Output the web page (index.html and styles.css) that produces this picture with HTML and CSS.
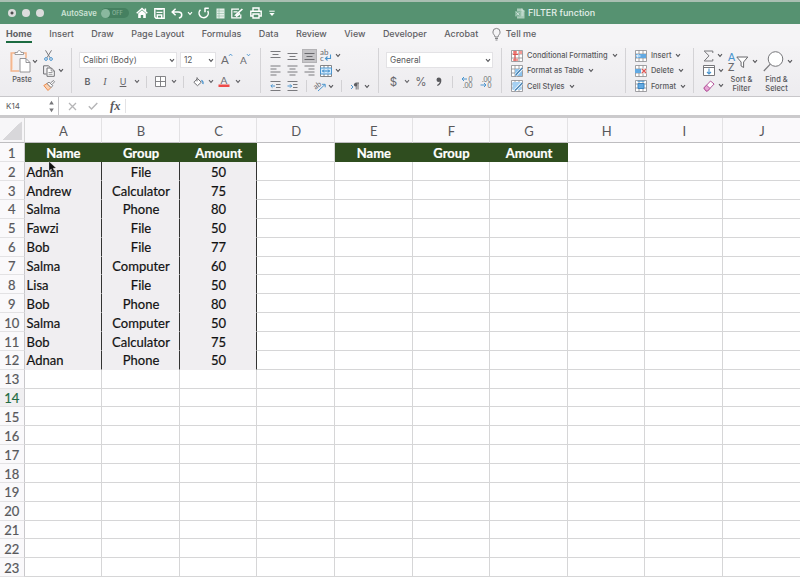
FILE: index.html
```html
<!DOCTYPE html>
<html lang="en">
<head>
    <meta charset="UTF-8">
    <meta name="viewport" content="width=device-width, initial-scale=1.0">
    <title>FILTER function</title>
    <link rel="stylesheet" href="styles.css">
</head>
<body>
    <svg class="defs">
        <symbol id="chev" viewBox="0 0 6 5"><path d="M1 1.2l2 2.2 2-2.2" fill="none" stroke="currentColor" stroke-width="1.1"/></symbol>
        <symbol id="table" viewBox="0 0 12 12"><path d="M.5.5h11v11H.5zM.5 4h11M.5 8h11M4 .5v11M8 .5v11" fill="#fff" stroke="#8a8a8e" stroke-width=".8"/></symbol>
    </svg>

    <div class="titlebar">
        <div class="lights"><i class="edited"></i><i></i><i></i></div>
        <span class="autosave">AutoSave</span>
        <span class="toggle"><i></i>OFF</span>
        <div class="quick">
            <svg width="12" height="12" viewBox="0 0 12 12"><path d="M.7 6.3L6 1.4l5.3 4.9M9.4 1.5v2.7" fill="none" stroke="#fff" stroke-width="1.5"/><path d="M2.2 6.6L6 3.2l3.8 3.4V11H7.2V8H4.8v3H2.2z" fill="#fff"/></svg>
            <svg width="11" height="11" viewBox="0 0 11 11"><path d="M.8.8h9.4v9.4H2L.8 9z" fill="none" stroke="#fff" stroke-width="1.4"/><path d="M2.5 1h6M2.5 4.4h6M3.3 10V7h4.4v3" fill="none" stroke="#fff" stroke-width="1.4"/></svg>
            <svg width="12" height="11" viewBox="0 0 12 11"><path d="M4.6.8L1.2 4l3.4 3.2M1.5 4h5.8c4.6 0 4.4 5.2.6 6" fill="none" stroke="#fff" stroke-width="1.5"/></svg>
            <svg class="undo-chev" width="6" height="5"><use href="#chev"/></svg>
            <svg width="12" height="12" viewBox="0 0 12 12"><path d="M2.500 2.700a4.600 4.600 0 1 0 7.200 1.100M6.600 1.300h4.200M7 1v4.200" fill="none" stroke="#fff" stroke-width="1.500"/></svg>
            <svg width="9" height="11" viewBox="0 0 9 11"><path d="M.5.5h8v10h-8z" fill="#e5f0ea"/><path d="M1 3h7M1 5.5h7M1 8h7M3 .5v10" stroke="#8ab89f" stroke-width=".6"/></svg>
            <svg width="13" height="11" viewBox="0 0 13 11"><path d="M8 1.2H.8v8.6h9V6.5M2.5 3.8h4" fill="none" stroke="#fff" stroke-width="1.2"/><path d="M3.2 8l2-.2L12 1.6 10.8.6 4.2 6.5z" fill="#fff"/><path d="M5 8.5l4-3" stroke="#fff" stroke-width="1.6"/></svg>
            <svg width="12" height="12" viewBox="0 0 12 12"><path d="M3 4V1h6v3M3 9H.8V4.2h10.4V9H9M3 7h6v4H3z" fill="none" stroke="#fff" stroke-width="1.4"/></svg>
            <svg width="6" height="7" viewBox="0 0 6 7"><path d="M.3 1.2h5.4" stroke="#fff"/><path d="M.4 3h5.2L3 5.9z" fill="#fff"/></svg>
        </div>
        <div class="doc">
            <svg width="10" height="11" viewBox="0 0 10 11"><path d="M2 .5h5L9.500 3v7.500H2z" fill="#a9cbb9"/><path d="M0 3h5.500v5.500H0z" fill="#84b49b"/><path d="M1.300 4.300l3 3m0-3l-3 3M7 .5V3h2.500M6.500 5h2M6.500 7h2" stroke="#e0eee7" stroke-width=".8" fill="none"/></svg>
            FILTER function
        </div>
    </div>

    <div class="tabs">
        <span class="active">Home</span>
        <span>Insert</span>
        <span>Draw</span>
        <span>Page Layout</span>
        <span>Formulas</span>
        <span>Data</span>
        <span>Review</span>
        <span>View</span>
        <span>Developer</span>
        <span>Acrobat</span>
        <span class="tell"><svg width="9" height="13" viewBox="0 0 9 13"><path d="M3 9C3 7 .9 6.500.9 4a3.500 3.500 0 0 1 7.200 0C8.100 6.500 6 7 6 9zM3 10.500h3M3.500 12h2" fill="none" stroke="#77777b" stroke-width=".9"/></svg>Tell me</span>
    </div>

    <div class="ribbon">
        <div class="group clipboard">
            <div class="paste">
                <div class="paste-top">
                    <svg width="21" height="23" viewBox="0 0 21 23"><path d="M5 3H1.200v18H9" fill="none" stroke="#f3b48b" stroke-width="1.500"/><path d="M2.500 4v15.500" stroke="#fbd9c3"/><path d="M13 3h3v5" fill="none" stroke="#f3b48b" stroke-width="1.500"/><path d="M5 4.500V2.500h2.500c0-2.600 3.500-2.600 3.500 0h2.500v2z" fill="#fff" stroke="#88888b" stroke-width=".8"/><path d="M10 8.500h6l4 4V22H10z" fill="#fff" stroke="#88888b" stroke-width=".9"/><path d="M16 8.500v4h4" fill="none" stroke="#88888b" stroke-width=".9"/></svg>
                    <svg width="6" height="5"><use href="#chev"/></svg>
                </div>
                <span>Paste</span>
            </div>
            <div class="stack">
                <div class="cut"><svg width="9" height="11" viewBox="0 0 9 11"><path d="M1.500.3l4.600 7.500M7.500.3L2.900 7.800" stroke="#7a7a7e"/><circle cx="2" cy="9" r="1.400" fill="none" stroke="#4b95cf"/><circle cx="7" cy="9" r="1.400" fill="none" stroke="#4b95cf"/></svg></div>
                <div><svg width="12" height="12" viewBox="0 0 12 12"><path d="M3.500 9H.6V.8h5l1.800 2" fill="none" stroke="#707074"/><path d="M4 3h4.500L11.300 6v5.300H4z" fill="#fff" stroke="#707074"/><path d="M8.200 3v3h3M5.500 7.500h4M5.500 9.300h4" fill="none" stroke="#707074" stroke-width=".7"/></svg><svg width="6" height="5"><use href="#chev"/></svg></div>
                <div><svg width="12" height="11" viewBox="0 0 12 11"><path d="M.8 5.500L4 3.500l4 4-3 3z" fill="#fbd1b2" stroke="#ee8d4d"/><path d="M4 3.500l2-1.300 3.800 3.500L8 7.500zM7.500 3l3-2.500 1 1.300L9 4.500" fill="#fff" stroke="#77777b" stroke-width=".9"/></svg></div>
            </div>
        </div>

        <div class="group font">
            <div class="row font-top">
                <div class="select">Calibri (Body)<svg width="6" height="5"><use href="#chev"/></svg></div>
                <div class="select">12<svg width="6" height="5"><use href="#chev"/></svg></div>
                <svg width="12" height="14" viewBox="0 -1 12 14"><text x="0" y="9.500" font-size="11.500">A</text><path d="M8 1.800L9.600.1l1.600 1.700" fill="none" stroke="#4b95cf"/></svg>
                <svg width="12" height="14" viewBox="0 -1 12 14"><text x="1" y="9.500" font-size="10">A</text><path d="M8 .2l1.500 1.600L11 .2" fill="none" stroke="#4b95cf"/></svg>
            </div>
            <div class="row font-bottom">
                <b>B</b><em>I</em><u>U</u><svg width="6" height="5"><use href="#chev"/></svg>
                <i class="sep"></i>
                <svg width="11" height="11" viewBox="0 0 11 11"><path d="M.5.5h10v10H.5zM5.500.5v10M.5 5.500h10" fill="#fff" stroke="#77777b" stroke-width=".9"/></svg><svg width="6" height="5"><use href="#chev"/></svg>
                <i class="sep"></i>
                <svg width="11" height="10" viewBox="0 0 11 10"><path d="M4.500 1.500L8.300 5.200 4.500 8.700.9 5.300zM4 .3v4" fill="#fff" stroke="#6f6f73"/><path d="M8.300 3.500c1.700.5 2 2 1.500 3.500" fill="none" stroke="#4b95cf" stroke-width="1.400"/></svg><svg width="6" height="5"><use href="#chev"/></svg>
                <svg width="12" height="13" viewBox="0 0 12 13"><text x="2.500" y="8.500" font-size="10">A</text><path d="M.5 9.500h11V12H.5z" fill="#ee4a48"/></svg><svg width="6" height="5"><use href="#chev"/></svg>
            </div>
        </div>

        <div class="group align">
            <div class="row align-row">
                <svg class="top" width="11" height="8" viewBox="0 0 11 8"><path d="M.5.5h10M2.500 3.500h6M.5 6.500h10" stroke="#7a7a7e"/></svg>
                <svg class="mid" width="11" height="8" viewBox="0 0 11 8"><path d="M.5.5h10M2.500 3.500h6M.5 6.500h10" stroke="#7a7a7e"/></svg>
                <span class="pressed"><svg width="11" height="8" viewBox="0 0 11 8"><path d="M.5.5h10M2.500 3.500h6M.5 6.500h10" stroke="#69696d"/></svg></span>
                <svg width="12" height="13" viewBox="0 0 12 13"><text x="0" y="6" font-size="8">ab</text><text x="0" y="12" font-size="8">c</text><path d="M10.500 5.500v4H5.500M7.500 7.500l-2 2 2 2" fill="none" stroke="#4b95cf" stroke-width="1.100"/></svg>
                <svg width="6" height="5"><use href="#chev"/></svg>
            </div>
            <div class="row align-row">
                <svg width="11" height="11" viewBox="0 0 11 11"><path d="M.5 1h10M.5 4h6M.5 7h10M.5 10h6" stroke="#7a7a7e"/></svg>
                <svg width="11" height="11" viewBox="0 0 11 11"><path d="M.5 1h10M2.500 4h6M.5 7h10M2.500 10h6" stroke="#7a7a7e"/></svg>
                <svg width="11" height="11" viewBox="0 0 11 11"><path d="M.5 1h10M4.500 4h6M.5 7h10M4.500 10h6" stroke="#7a7a7e"/></svg>
                <svg width="12" height="12" viewBox="0 0 12 12"><path d="M.5.5h11v11H.5zM4 .5v11M8 .5v11" fill="#fff" stroke="#77777b" stroke-width=".9"/><path d="M.5 3h11v6H.5z" fill="#d5eafb" stroke="#4b95cf"/><path d="M2.500 6h7M4 4.500L2.500 6 4 7.500M8 4.500L9.500 6 8 7.500" fill="none" stroke="#2f83c6"/></svg>
                <svg width="6" height="5"><use href="#chev"/></svg>
            </div>
            <div class="row indent-row">
                <svg width="11" height="10" viewBox="0 0 11 10"><path d="M.5.5h10M6 3.500h4.500M6 6.500h4.500M.5 9.500h10" stroke="#7a7a7e"/><path d="M5 5H1M2.500 3.300L.8 5l1.700 1.700" fill="none" stroke="#4b95cf"/></svg>
                <svg width="11" height="10" viewBox="0 0 11 10"><path d="M.5.5h10M6 3.500h4.500M6 6.500h4.500M.5 9.500h10" stroke="#7a7a7e"/><path d="M.5 5h4M3 3.300L4.700 5 3 6.700" fill="none" stroke="#4b95cf"/></svg>
                <i class="sep"></i>
                <svg width="12" height="12" viewBox="0 0 12 12"><text x="0" y="7" font-size="7.500" transform="rotate(-35 3 5) translate(-1 1)">ab</text><path d="M4 11l7-6.500M8 4.300h3.200v3" fill="none" stroke="#4b95cf"/></svg>
                <svg width="6" height="5"><use href="#chev"/></svg>
                <i class="sep"></i>
                <svg width="10" height="9" viewBox="0 0 10 9"><path d="M1 3l2 2-2 2" fill="none" stroke="#4b95cf"/><path d="M6.200 1v6.500M8 1v6.500M5.500 1H9" stroke="#5d5d61" stroke-width=".9"/><circle cx="5.600" cy="2.800" r="1.700" fill="#5d5d61"/></svg>
                <svg width="6" height="5"><use href="#chev"/></svg>
            </div>
        </div>

        <div class="group number">
            <div class="row"><div class="select">General<svg width="6" height="5"><use href="#chev"/></svg></div></div>
            <div class="row number-bottom">
                <span>$</span><svg width="6" height="5"><use href="#chev"/></svg><span>%</span>
                <svg width="6" height="10" viewBox="0 0 6 10"><circle cx="2.800" cy="2.800" r="2.300" fill="#59595d"/><path d="M4.700 2.500c.2 3-1 4.800-3.400 6" fill="none" stroke="#59595d" stroke-width="1.300"/></svg>
                <i class="sep"></i>
                <svg width="12" height="12" viewBox="0 0 12 12"><text x="7.500" y="5.600" font-size="6.800">0</text><text x="2" y="11.500" font-size="6.800">.00</text><path d="M6 3H1.200M3 1L1 3l2 2" fill="none" stroke="#4b95cf"/></svg>
                <svg width="12" height="12" viewBox="0 0 12 12"><text x="2" y="5.600" font-size="6.800">.00</text><text x="7.500" y="11.500" font-size="6.800">0</text><path d="M.5 9h5M4 7l2 2-2 2" fill="none" stroke="#4b95cf"/></svg>
            </div>
        </div>

        <div class="group list styles">
            <div><svg width="12" height="12"><use href="#table"/><path d="M2 1h4v3H2zM2 8.500h5v2.500H2zM8 1h3v3H8z" fill="#f29a96"/><path d="M4 1v10M2 4.500h5" stroke="#e1534f"/></svg>Conditional Formatting<svg width="6" height="5"><use href="#chev"/></svg></div>
            <div><svg width="12" height="12"><use href="#table"/><path d="M4 4h7v7H4z" fill="#8cc2ec"/><path d="M4.500 10.500L11 3.500" stroke="#fff" stroke-width="2.600"/><path d="M4.500 10.500l2-2.500L11.300 3" stroke="#4280b4" stroke-width="1.300"/></svg>Format as Table<svg width="6" height="5"><use href="#chev"/></svg></div>
            <div><svg width="12" height="12"><use href="#table"/><path d="M1.500 2h9v8h-9z" fill="#a5d0f2"/><path d="M4 10.500L11 3" stroke="#fff" stroke-width="2.600"/><path d="M4 10.500l2.500-2.500L11.300 3" stroke="#4280b4" stroke-width="1.300"/></svg>Cell Styles<svg width="6" height="5"><use href="#chev"/></svg></div>
        </div>

        <div class="group list cells">
            <div><svg width="12" height="12"><use href="#table"/><path d="M1 4h10v4H1z" fill="#62a9e2"/><path d="M5.500 6H1.500M3.300 4.300L1.600 6l1.700 1.700" fill="none" stroke="#fff"/></svg>Insert<svg width="6" height="5"><use href="#chev"/></svg></div>
            <div><svg width="12" height="12"><use href="#table"/><path d="M0 4h6v4H0z" fill="#62a9e2"/><path d="M6.500 3.300h5v5.400h-5z" fill="#f1f0f2"/><path d="M7 4l4 4m0-4L7 8" stroke="#e05451" stroke-width="1.100"/></svg>Delete<svg width="6" height="5"><use href="#chev"/></svg></div>
            <div><svg width="12" height="12"><use href="#table"/><path d="M3 3.500h6v5H3z" fill="#62a9e2" stroke="#3c83bd"/><path d="M2.500 1.200h7" stroke="#4b95cf"/></svg>Format<svg width="6" height="5"><use href="#chev"/></svg></div>
        </div>

        <div class="group editing">
            <div class="stack">
                <div><svg width="11" height="12" viewBox="0 0 11 12"><path d="M9.800 3V1H1.200L6 5.800 1.200 11h8.600V9" fill="none" stroke="#77777b"/></svg><svg width="6" height="5"><use href="#chev"/></svg></div>
                <div><svg width="12" height="11" viewBox="0 0 12 11"><path d="M.5.5h11v10H.5zM.5 2.500h11" fill="#fff" stroke="#77777b"/><path d="M6 3.500V9M4 7l2 2 2-2" fill="none" stroke="#4b95cf" stroke-width="1.100"/></svg><svg width="6" height="5"><use href="#chev"/></svg></div>
                <div><svg width="12" height="12" viewBox="0 0 12 12"><path d="M.9 8L7.500 1l3.600 3-6.600 7H3z" fill="#fff" stroke="#b5579c"/><path d="M.9 8l2.600-2.800L7 8.400 4.500 11H3z" fill="#e7a6d6" stroke="#b5579c"/></svg><svg width="6" height="5"><use href="#chev"/></svg></div>
            </div>
            <div class="big">
                <div><svg width="21" height="20" viewBox="0 0 21 20"><text class="blue" x="0" y="8.500" font-size="10.500">A</text><text x="0" y="18.500" font-size="10.500">Z</text><path d="M8.800 5h11l-4.200 5v5.500l-2.500-1.500v-4z" fill="#fff" stroke="#69696d"/></svg><svg width="6" height="5"><use href="#chev"/></svg></div>
                <span>Sort &amp;<br>Filter</span>
            </div>
            <div class="big">
                <div><svg width="21" height="21" viewBox="0 0 21 21"><circle cx="12.500" cy="8" r="7.300" fill="#fff" stroke="#77777b"/><path d="M7.300 13.200L.8 20" stroke="#77777b" stroke-width="1.200"/></svg><svg width="6" height="5"><use href="#chev"/></svg></div>
                <span>Find &amp;<br>Select</span>
            </div>
        </div>
    </div>

    <div class="formula">
        <div class="namebox">K14<svg width="5" height="13" viewBox="0 0 5 13"><path d="M.2 4.500L2.500.8l2.300 3.700zM.2 8.500l2.300 3.700 2.300-3.700z" fill="#77777b"/></svg></div>
        <svg class="cancel" width="9" height="9" viewBox="0 0 9 9"><path d="M1 1l7 7m0-7L1 8" stroke="#b5b5b7" stroke-width="1.300"/></svg>
        <svg class="enter" width="10" height="8" viewBox="0 0 10 8"><path d="M.8 4.300l2.700 2.700L9.300 1" fill="none" stroke="#b5b5b7" stroke-width="1.400"/></svg>
        <span class="fx">fx</span>
    </div>

    <div class="sheet" id="sheet"></div>

    <svg class="pointer" width="9" height="13" viewBox="0 0 9 13"><path d="M1 .5v9.300l2.200-1.900 1.600 3.800 1.900-.8-1.600-3.700 2.900-.2z" fill="#111" stroke="#ddd" stroke-width=".3"/></svg>

    <script>
        const columns = ['A', 'B', 'C', 'D', 'E', 'F', 'G', 'H', 'I', 'J'];
        const titles = ['Name', 'Group', 'Amount'];
        const data = [
            ['Adnan', 'File', 50],
            ['Andrew', 'Calculator', 75],
            ['Salma', 'Phone', 80],
            ['Fawzi', 'File', 50],
            ['Bob', 'File', 77],
            ['Salma', 'Computer', 60],
            ['Lisa', 'File', 50],
            ['Bob', 'Phone', 80],
            ['Salma', 'Computer', 50],
            ['Bob', 'Calculator', 75],
            ['Adnan', 'Phone', 50]
        ];
        const sheet = document.getElementById('sheet');

        function addCell(text, className) {
            const cell = document.createElement('div');
            cell.className = className;
            cell.textContent = text;
            sheet.appendChild(cell);
        }

        addCell('', 'corner');
        columns.forEach(name => addCell(name, 'col-head'));

        for (let row = 1; row <= 23; row++) {
            addCell(row, row === 14 ? 'row-head current' : 'row-head');
            columns.forEach((name, i) => {
                if (row === 1 && i < 7 && i !== 3) {
                    addCell(titles[i % 4], 'cell title');
                } else if (row > 1 && row <= 12 && i < 3) {
                    addCell(data[row - 2][i], i === 0 ? 'cell filled first' : 'cell filled');
                } else {
                    addCell('', 'cell');
                }
            });
        }
    </script>
</body>
</html>
```
FILE: styles.css
```css
* {
    box-sizing: border-box;
}
body {
    margin: 0;
    width: 800px;
    height: 579px;
    overflow: hidden;
    background: #fff;
    color: #58585c;
    font-family: Inter, "Liberation Sans", sans-serif;
    font-size: 8px;
    position: relative;
}
svg {
    display: block;
    flex: none;
    overflow: visible;
}
svg text {
    font-family: Lato, sans-serif;
    fill: #6a6a6e;
}
svg text.blue {
    fill: #4b95cf;
}
.defs {
    position: absolute;
    width: 0;
    height: 0;
}

/* title bar */
.titlebar {
    height: 24px;
    border-top: 2px solid #a9bfb2;
    background: #569271;
    display: flex;
    align-items: center;
    color: #e4efe9;
}
.lights {
    display: flex;
    gap: 6px;
    margin-left: 8px;
}
.lights i {
    width: 8px;
    height: 8px;
    border-radius: 50%;
    background: #dcdcdc;
}
.lights .edited {
    background: radial-gradient(circle, #4d4d4d 1.2px, #dcdcdc 1.8px);
}
.autosave {
    width: 40px;
    margin-left: 17px;
    font-size: 7.7px;
    font-weight: 600;
    color: #cde2d6;
}
.toggle {
    width: 28px;
    height: 10px;
    border-radius: 5px;
    background: #458060;
    color: #85b198;
    font-size: 5.5px;
    font-weight: 600;
    display: flex;
    align-items: center;
    gap: 2px;
}
.toggle i {
    width: 9px;
    height: 9px;
    border-radius: 50%;
    background: #8ab89f;
}
.quick {
    display: flex;
    align-items: center;
    gap: 6.2px;
    margin-left: 7px;
    width: 142px;
}
.quick .undo-chev {
    margin: 0 -1px 0 -3px;
    color: #fff;
}
.doc {
    display: flex;
    align-items: center;
    gap: 3px;
    margin-left: 237px;
    font-size: 9px;
    font-weight: 500;
    line-height: 20px;
    height: 22px;
    white-space: nowrap;
}

/* tabs */
.tabs {
    height: 22px;
    padding: 0 0 0 6px;
    background: #f5f4f6;
    display: flex;
    gap: 17.4px;
    font-size: 9px;
    font-weight: 500;
    line-height: 20px;
    color: #606064;
    white-space: nowrap;
}
.tabs .active {
    font-weight: 700;
    height: 19px;
    border-bottom: 2px solid #1d6b41;
}
.tell {
    display: flex;
    align-items: center;
    gap: 5px;
    height: 20px;
    margin-left: -4px;
}

/* ribbon */
.ribbon {
    height: 51px;
    padding-top: 2px;
    background: linear-gradient(#f4f3f5, #edecef);
    border-bottom: 1px solid #c8c7ca;
    display: flex;
}
.group {
    height: 45px;
    border-right: 1px solid #d4d3d6;
    flex: none;
}
.row {
    display: grid;
    align-items: center;
    justify-items: center;
}
.sep {
    width: 1px;
    height: 12px;
    background: #d2d1d4;
}
.select {
    width: 100%;
    height: 16px;
    padding: 0 1px 0 3px;
    border: 1px solid #e3e2e5;
    background: #fff;
    display: flex;
    align-items: center;
    justify-content: space-between;
    font-size: 8.3px;
}
.stack {
    display: flex;
    flex-direction: column;
}
.stack div {
    height: 15.3px;
    display: flex;
    align-items: center;
    gap: 3px;
}
.clipboard {
    width: 72px;
    display: flex;
}
.paste {
    width: 32px;
    margin-left: 10px;
    font-size: 7.4px;
    font-weight: 500;
}
.paste-top {
    height: 27px;
    display: flex;
    align-items: center;
    gap: 1px;
}
.paste span {
    display: block;
    width: 24px;
    text-align: center;
}
.clipboard .stack {
    padding-left: 1px;
}
.clipboard .cut {
    padding-left: 1px;
}
.font {
    width: 189px;
    padding: 4px 0 0 7px;
}
.font-top {
    grid-template-columns: 98px 36px 15px 15px;
    column-gap: 3px;
}
.font-bottom {
    grid-template-columns: 17px 18px 18px 9px 11px 17px 9px 10px 20px 5px 22px 5px;
    height: 27px;
    font-size: 9px;
    color: #626266;
}
.font-bottom b {
    font-weight: 600;
}
.font-bottom em {
    font-family: "Liberation Serif", serif;
    font-size: 10px;
}
.align {
    width: 118px;
    padding-left: 6px;
}
.align-row {
    grid-template-columns: 17px 17px 17px 16px 8px;
    height: 15px;
}
.align-row .top {
    position: relative;
    top: -1px;
}
.align-row .mid {
    position: relative;
    top: 1px;
}
.pressed {
    width: 15px;
    height: 14px;
    background: #c5c4c7;
    border: 1px solid #b4b3b6;
    display: flex;
    align-items: center;
    justify-content: center;
    padding-top: 3px;
}
.indent-row {
    grid-template-columns: 17px 17px 11px 16px 6px 14px 14px 10px;
    height: 16px;
}
.number {
    width: 123px;
    padding: 4px 8px 0 7px;
}
.number-bottom {
    grid-template-columns: 15px 11px 18px 17px 10px 20px 18px;
    height: 27px;
    font-size: 11.5px;
    color: #68686c;
}
.list div {
    height: 15.3px;
    display: flex;
    align-items: center;
    gap: 4px;
    font-size: 7.45px;
    font-weight: 500;
    white-space: nowrap;
}
.styles {
    width: 124px;
    padding-left: 9px;
}
.cells {
    width: 68px;
    padding-left: 9px;
}
.editing {
    border: 0;
    display: flex;
    padding-left: 9px;
}
.editing .stack {
    width: 25px;
}
.big {
    width: 35px;
    font-size: 7.5px;
    font-weight: 500;
    line-height: 8.5px;
}
.big div {
    height: 27px;
    display: flex;
    align-items: center;
    gap: 3px;
}
.big span {
    display: block;
    width: 27px;
    padding-top: 1px;
    text-align: center;
}

/* formula bar */
.formula {
    height: 21px;
    border-bottom: 3px solid #cbcacc;
    background: #fff;
    display: flex;
    align-items: center;
}
.namebox {
    width: 59px;
    height: 18px;
    padding: 0 4px 0 6px;
    border-right: 1px solid #c4c3c6;
    display: flex;
    align-items: center;
    justify-content: space-between;
    font-size: 8px;
}
.cancel {
    margin-left: 9px;
}
.enter {
    margin-left: 11px;
}
.fx {
    height: 14px;
    padding-right: 5px;
    margin-left: 12px;
    border-right: 1px solid #e4e3e5;
    font: italic bold 12.5px/15px "Liberation Serif", serif;
}

/* sheet */
.sheet {
    display: grid;
    grid-template-columns: 24.6px repeat(10, 77.62px);
    grid-template-rows: 25.4px repeat(23, 18.87px);
    width: 801px;
    font-family: Lato, "Liberation Sans", sans-serif;
    font-size: 13px;
    color: #111;
    -webkit-text-stroke: 0.2px;
}
.sheet div {
    display: flex;
    align-items: center;
    justify-content: center;
    padding: 1.2px 0 0 1px;
    border-right: 1px solid #d6d6d7;
    border-bottom: 1px solid #d6d6d7;
}
.sheet .corner {
    background: linear-gradient(to bottom right, transparent 50%, #d8d7da 50.5%) 2px 3px / 20px 19px no-repeat #f7f6f8;
    border-bottom-color: #bebdc0;
}
.sheet .col-head {
    background: #faf9fb;
    border-right-color: #e3e2e4;
    border-bottom-color: #bebdc0;
    color: #58585b;
    -webkit-text-stroke: 0;
}
.sheet .row-head {
    background: #faf9fb;
    border-right-color: #c9c8cb;
    border-bottom-color: #e3e2e4;
    color: #58585b;
    padding-left: 0;
}
.sheet .current {
    background: #f0eff1;
    color: #1f6b43;
}
.sheet .title {
    background: #2f4d1f;
    border-color: #2f4d1f;
    color: #fff;
    font-weight: 700;
}
.sheet .filled {
    background: #f0eef1;
    border-right-color: #333;
    border-bottom-color: #f0eef1;
}
.sheet .first {
    justify-content: flex-start;
    padding-left: 2px;
}
.pointer {
    position: absolute;
    left: 48px;
    top: 161px;
}
```
